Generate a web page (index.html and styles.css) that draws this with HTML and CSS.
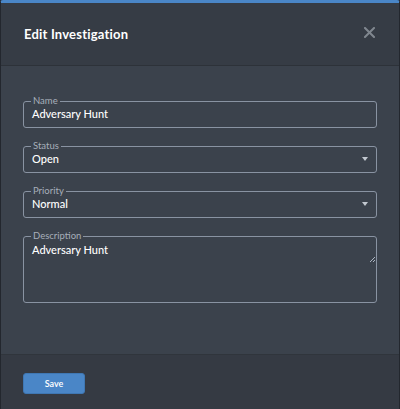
FILE: index.html
```html
<!DOCTYPE html>
<html>
<head>
<meta charset="utf-8">
<link rel="stylesheet" href="styles.css">
</head>
<body>
<div class="modal">
  <div class="header">
    <h1 class="title">Edit Investigation</h1>
    <svg class="close" width="11" height="11" viewBox="0 0 11 11"><path d="M1 1L10 10M10 1L1 10" stroke="#80878f" stroke-width="2" stroke-linecap="square"/></svg>
  </div>
  <div class="body">
    <fieldset class="field">
      <legend class="label">Name</legend>
      <div class="value">Adversary Hunt</div>
    </fieldset>
    <fieldset class="field">
      <legend class="label">Status</legend>
      <div class="value select">Open<span class="caret"></span></div>
    </fieldset>
    <fieldset class="field">
      <legend class="label">Priority</legend>
      <div class="value select">Normal<span class="caret"></span></div>
    </fieldset>
    <fieldset class="field area">
      <legend class="label">Description</legend>
      <div class="value">Adversary Hunt</div>
      <svg class="grip" width="7" height="7" viewBox="0 0 7 7"><path d="M6 1L1 6M6 4L4 6" stroke="#aab3c0" stroke-width="1"/></svg>
    </fieldset>
  </div>
  <div class="footer">
    <button class="save">Save</button>
  </div>
</div>
</body>
</html>
```
FILE: styles.css
```css
html, body {
  margin: 0;
  padding: 0;
  background: #262a31;
}
body {
  font-family: Lato, "Open Sans", "Liberation Sans", sans-serif;
  width: 400px;
  height: 409px;
}
.modal {
  width: 398px;
  height: 406px;
  border-left: 1px solid #23272e;
  border-right: 1px solid #23272e;
  border-bottom: 2px solid #23272e;
  border-top: 3px solid #4a86c7;
  border-radius: 3px 3px 0 0;
  display: flex;
  flex-direction: column;
  overflow: hidden;
}
.header {
  height: 63px;
  background: #363c45;
  border-bottom: 1px solid #2d3239;
  display: flex;
  align-items: center;
  justify-content: space-between;
  padding: 0 24px 0 23px;
  box-sizing: border-box;
  flex: none;
}
.title {
  margin: 0;
  font-size: 13px;
  font-weight: 700;
  color: #ffffff;
  letter-spacing: 0.2px;
}
.close {
  margin-top: -4px;
}
.body {
  background: #3b424c;
  flex: 1;
  padding: 30px 22px 0 22px;
  display: flex;
  flex-direction: column;
  gap: 13px;
}
.field {
  margin: 0;
  padding: 0 7px 6px 7px;
  border: 1px solid #8993a2;
  border-radius: 3px;
  min-width: 0;
}
.label {
  font-size: 9.5px;
  line-height: 10px;
  color: #a7afba;
  padding: 0 2px;
  margin-left: 0;
}
.value {
  font-size: 11px;
  line-height: 14px;
  color: #ffffff;
  font-weight: 500;
  padding-top: 1px;
  padding-left: 1px;
  position: relative;
}
.select {
  display: flex;
  justify-content: space-between;
  align-items: center;
}
.caret {
  width: 0;
  height: 0;
  border-left: 3.5px solid transparent;
  border-right: 3.5px solid transparent;
  border-top: 4px solid #c2c8d0;
  margin-right: 1px;
}
.area {
  height: 72px;
  box-sizing: border-box;
  position: relative;
}
.area .value {
  padding-top: 2px;
}
.grip {
  position: absolute;
  right: 0;
  bottom: 0;
}
.footer {
  height: 54px;
  background: #353a43;
  border-top: 1px solid #30353c;
  display: flex;
  align-items: center;
  padding: 0 22px;
  flex: none;
}
.save {
  width: 62px;
  height: 21px;
  background: #4a86c7;
  border: 1px solid #3f77b3;
  border-radius: 3px;
  color: #ffffff;
  font-family: Lato, "Open Sans", "Liberation Sans", sans-serif;
  font-size: 9px;
  font-weight: 600;
  padding: 0;
  margin-top: 2px;
}
```
